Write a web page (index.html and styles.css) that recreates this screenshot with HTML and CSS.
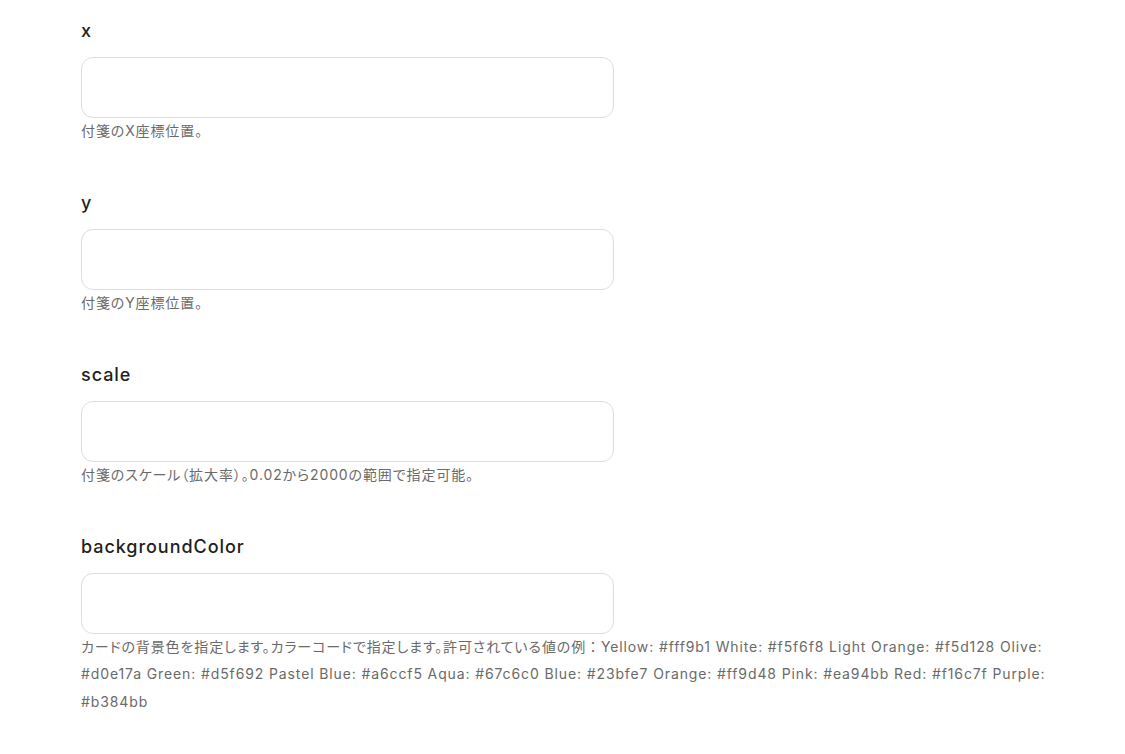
FILE: index.html
```html
<!DOCTYPE html>
<html lang="ja">
<head>
<meta charset="utf-8">
<title>Form</title>
<link rel="stylesheet" href="styles.css">
</head>
<body>
<main class="form">
  <div class="field">
    <label class="label">x</label>
    <div class="input"></div>
    <p class="desc">付箋のX座標位置。</p>
  </div>
  <div class="field">
    <label class="label">y</label>
    <div class="input"></div>
    <p class="desc">付箋のY座標位置。</p>
  </div>
  <div class="field">
    <label class="label">scale</label>
    <div class="input"></div>
    <p class="desc">付箋のスケール（拡大率）。0.02から2000の範囲で指定可能。</p>
  </div>
  <div class="field">
    <label class="label">backgroundColor</label>
    <div class="input"></div>
    <p class="desc">カードの背景色を指定します。カラーコードで指定します。許可されている値の例<span class="fw">：</span>Yellow: #fff9b1 White: #f5f6f8 Light Orange: #f5d128 Olive: #d0e17a Green: #d5f692 Pastel Blue: #a6ccf5 Aqua: #67c6c0 Blue: #23bfe7 Orange: #ff9d48 Pink: #ea94bb Red: #f16c7f Purple: #b384bb</p>
  </div>
</main>
</body>
</html>
```

FILE: styles.css
```css
* { box-sizing: border-box; }
html, body { margin: 0; padding: 0; background: #ffffff; }
body {
  font-family: Inter, "Noto Sans CJK JP", sans-serif;
}
.form {
  display: flex;
  flex-direction: column;
  gap: 45px;
  padding: 17px 0 0 81px;
  width: 1081px;
}
.field {
  display: flex;
  flex-direction: column;
}
.label {
  display: block;
  font-size: 18px;
  line-height: 28px;
  font-weight: 500;
  color: #1f1f1f;
  letter-spacing: 0.95px;
  margin-bottom: 12px;
}
.input {
  width: 533px;
  height: 61px;
  border: 1px solid #dedede;
  border-radius: 12px;
  background: #fff;
}
.desc {
  margin: -1.5px 0 0 0;
  font-size: 14px;
  line-height: 27.5px;
  color: #6a6a6a;
  letter-spacing: 0.88px;
  font-feature-settings: "palt";
}
.fw {
  font-feature-settings: normal;
}
```
